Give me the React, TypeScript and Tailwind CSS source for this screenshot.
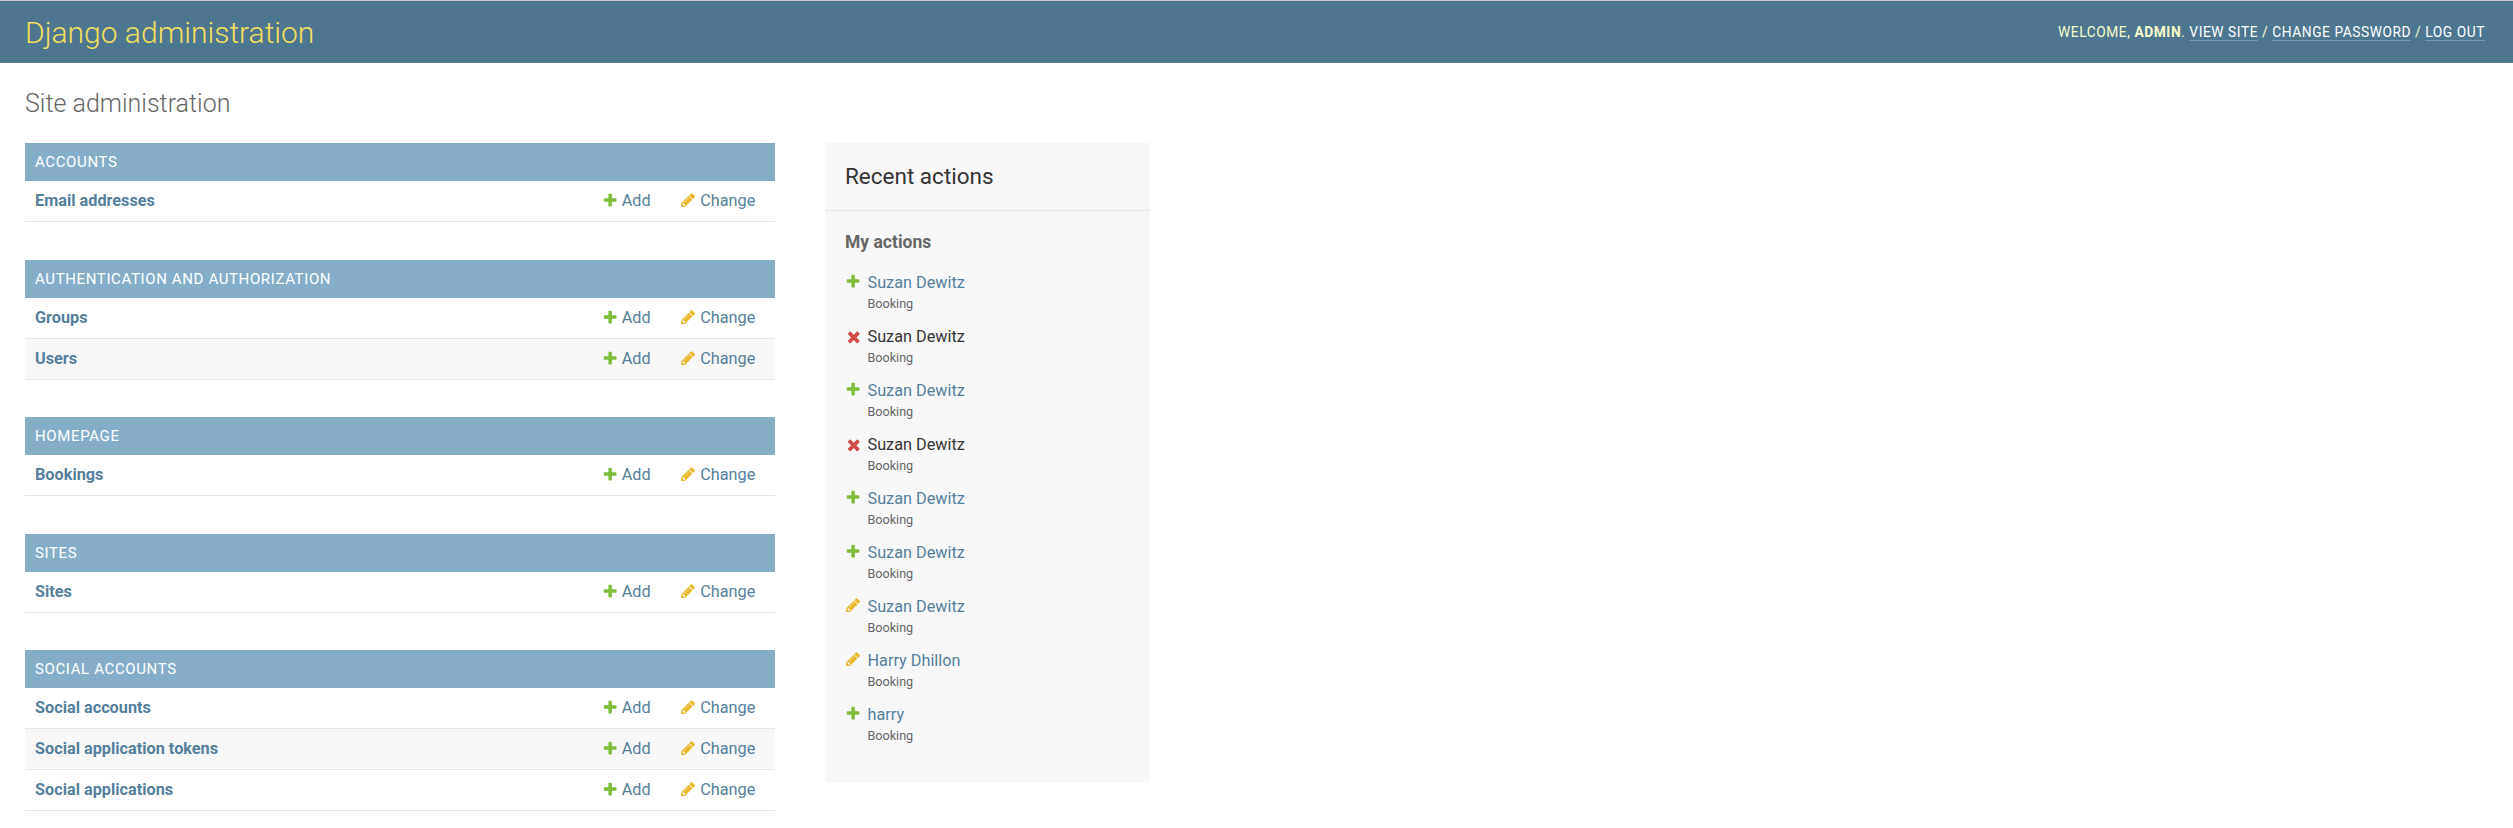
const ADD =
  'M1600 796v192q0 40-28 68t-68 28h-416v416q0 40-28 68t-68 28h-192q-40 0-68-28t-28-68v-416h-416q-40 0-68-28t-28-68v-192q0-40 28-68t68-28h416v-416q0-40 28-68t68-28h192q40 0 68 28t28 68v416h416q40 0 68 28t28 68z';
const CHANGE =
  'M491 1536l91-91-235-235-91 91v107h128v128h107zm523-928q0-22-22-22-10 0-17 7l-542 542q-7 7-7 17 0 22 22 22 10 0 17-7l542-542q7-7 7-17zm-54-192l416 416-832 832h-416v-416zm683 96q0 53-37 90l-166 166-416-416 166-165q36-38 90-38 53 0 91 38l235 234q37 39 37 91z';
const DELETE =
  'M1490 1322q0 40-28 68l-136 136q-28 28-68 28t-68-28l-294-294-294 294q-28 28-68 28t-68-28l-136-136q-28-28-28-68t28-68l294-294-294-294q-28-28-28-68t28-68l136-136q28-28 68-28t68 28l294 294 294-294q28-28 68-28t68 28l136 136q28 28 28 68t-28 68l-294 294 294 294q28 28 28 68z';

type Kind = 'add' | 'change' | 'delete';

const ICONS: Record<Kind, { d: string; className: string }> = {
  add: { d: ADD, className: 'fill-[#7fbd3a] size-[16.25px]' },
  change: { d: CHANGE, className: 'fill-[#e8b82a] size-[16.25px]' },
  delete: { d: DELETE, className: 'fill-[#d04c49] size-[17.5px] mt-px' },
};

function Icon({ kind }: { kind: Kind }) {
  const icon = ICONS[kind];
  return (
    <svg viewBox="0 0 1792 1792" className={`shrink-0 ${icon.className}`} aria-hidden="true">
      <path d={icon.d} />
    </svg>
  );
}

const MODULES = [
  { name: 'Accounts', models: ['Email addresses'] },
  { name: 'Authentication and Authorization', models: ['Groups', 'Users'] },
  { name: 'Homepage', models: ['Bookings'] },
  { name: 'Sites', models: ['Sites'] },
  { name: 'Social Accounts', models: ['Social accounts', 'Social application tokens', 'Social applications'] },
];

const ACTIONS: { kind: Kind; label: string }[] = [
  { kind: 'add', label: 'Suzan Dewitz' },
  { kind: 'delete', label: 'Suzan Dewitz' },
  { kind: 'add', label: 'Suzan Dewitz' },
  { kind: 'delete', label: 'Suzan Dewitz' },
  { kind: 'add', label: 'Suzan Dewitz' },
  { kind: 'add', label: 'Suzan Dewitz' },
  { kind: 'change', label: 'Suzan Dewitz' },
  { kind: 'change', label: 'Harry Dhillon' },
  { kind: 'add', label: 'harry' },
];

function UserLink({ children }: { children: string }) {
  return (
    <a href="#" className="border-b border-white/25 text-white">
      {children}
    </a>
  );
}

function Header() {
  return (
    <header className="flex h-[63px] items-center justify-between border-t border-[#c8c8c8] bg-[#4f768f] pr-7 pl-[25px]">
      <h1 className="pt-px text-[30px] leading-[38px] font-light text-[#f5df60]">Django administration</h1>
      <div className="text-[13.75px] leading-4 tracking-[0.56px] text-[#fbfccb] uppercase">
        Welcome, <strong className="font-bold">admin</strong>. <UserLink>View site</UserLink> /{' '}
        <UserLink>Change password</UserLink> / <UserLink>Log out</UserLink>
      </div>
    </header>
  );
}

function Module({ name, models }: { name: string; models: string[] }) {
  return (
    <section className="odd:mb-[38px] even:mb-[37px]">
      <h2 className="flex h-[38px] items-center bg-[#86adc7] px-2.5 text-[15px] tracking-[0.625px] text-white uppercase">
        {name}
      </h2>
      {models.map((model) => (
        <div
          key={model}
          className="flex h-[41px] items-center border-b border-[#e6e6e6] pl-2.5 text-[16.25px] text-[#557f9c] odd:bg-[#f8f8f8]"
        >
          <a href="#" className="grow font-bold">
            {model}
          </a>
          <a href="#" className="flex w-[78px] items-center gap-[3.5px] [&>svg]:mb-0.5">
            <Icon kind="add" />
            Add
          </a>
          <a href="#" className="flex w-[95px] items-center gap-[4px] [&>svg]:mb-0.5">
            <Icon kind="change" />
            Change
          </a>
        </div>
      ))}
    </section>
  );
}

function RecentActions() {
  return (
    <aside className="h-[640px] w-[325px] bg-[#f8f8f8]">
      <h2 className="flex h-[68px] items-center border-b border-[#e6e6e6] px-5 text-[22.5px] text-[#333]">
        Recent actions
      </h2>
      <div className="px-5 pt-5">
        <h3 className="text-[17.5px] leading-[22px] font-bold text-[#666]">My actions</h3>
        <ul className="pt-[18px]">
          {ACTIONS.map(({ kind, label }, i) => (
            <li key={i} className="flex h-[54px]">
              <div className="w-[22.5px] pt-0.5">
                <Icon kind={kind} />
              </div>
              <div className="pt-px">
                <div
                  className={`text-[16.25px] leading-[22px] ${kind === 'delete' ? 'text-[#333]' : 'text-[#557f9c]'}`}
                >
                  {label}
                </div>
                <div className="text-[12.6px] leading-5 text-[#666]">Booking</div>
              </div>
            </li>
          ))}
        </ul>
      </div>
    </aside>
  );
}

export default function App() {
  return (
    <div className="h-[828px] overflow-hidden bg-white font-[Roboto,sans-serif]">
      <Header />
      <main className="px-[25px] pt-[25px]">
        <h1 className="mb-[23px] text-[25px] leading-8 font-light text-[#666]">Site administration</h1>
        <div className="flex items-start gap-[50px]">
          <div className="w-[750px]">
            {MODULES.map((m) => (
              <Module key={m.name} {...m} />
            ))}
          </div>
          <RecentActions />
        </div>
      </main>
    </div>
  );
}
